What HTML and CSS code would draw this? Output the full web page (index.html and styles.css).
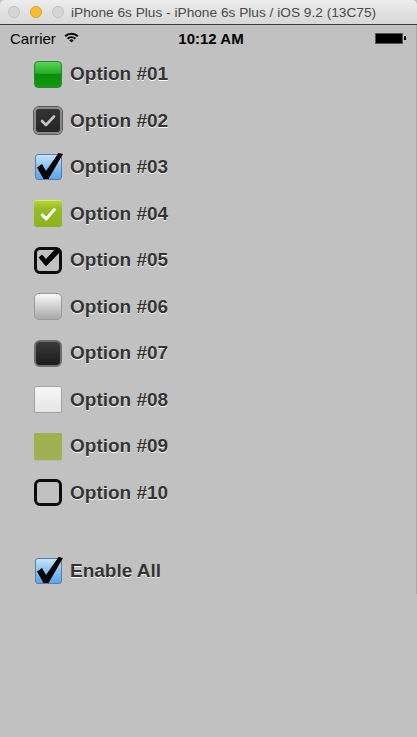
FILE: index.html
```html
<!DOCTYPE html>
<html lang="en">

<head>
  <meta charset="UTF-8">
  <title>Checkbox Styles</title>
  <link rel="stylesheet" href="styles.css">
</head>

<body>
  <div class="titlebar">
    <div class="lights">
      <span class="light"></span>
      <span class="light yellow"></span>
      <span class="light"></span>
    </div>
    <div class="title">iPhone 6s Plus - iPhone 6s Plus / iOS 9.2 (13C75)</div>
  </div>

  <div class="screen">
    <div class="statusbar">
      <div class="carrier">Carrier
        <svg class="wifi" width="15" height="11" viewBox="0 0 15 11">
          <path d="M0.5 3.6 A10 10 0 0 1 14.5 3.6 L13.1 5 A8 8 0 0 0 1.9 5 Z" fill="#000" />
          <path d="M2.9 6 A6.6 6.6 0 0 1 12.1 6 L10.7 7.4 A4.6 4.6 0 0 0 4.3 7.4 Z" fill="#000" />
          <path d="M5.3 8.4 A3.2 3.2 0 0 1 9.7 8.4 L7.5 10.6 Z" fill="#000" />
        </svg>
      </div>
      <div class="time">10:12 AM</div>
      <div class="battery"><span class="cell"></span><span class="tip"></span></div>
    </div>

    <ul class="options">
      <li class="option"><span class="box green"></span><span class="label">Option #01</span></li>
      <li class="option">
        <span class="box dark">
          <svg viewBox="0 0 24 23"><path d="M6 12 L10 16 L18 7.5" fill="none" stroke="#c4c4c4" stroke-width="2.6" stroke-linecap="round" stroke-linejoin="round" /></svg>
        </span><span class="label">Option #02</span>
      </li>
      <li class="option">
        <span class="box blue">
          <svg viewBox="0 0 25 24"><path d="M1 12.5 L6 9 L10 16 L22.5 -2 L27 -1 L12.5 24 L7.5 24 Z" fill="#000" /></svg>
        </span><span class="label">Option #03</span>
      </li>
      <li class="option">
        <span class="box lime">
          <svg viewBox="0 0 28 27"><path d="M8 14.5 L12.2 18.5 L20.5 9" fill="none" stroke="#fff" stroke-width="3.2" stroke-linecap="round" stroke-linejoin="round" /></svg>
        </span><span class="label">Option #04</span>
      </li>
      <li class="option">
        <span class="box outline">
          <svg viewBox="0 0 22 21"><path d="M1.5 7.5 L5 4.5 L9 9 L19.5 -2.5 L24 1 L9 16.5 Z" fill="#000" /></svg>
        </span><span class="label">Option #05</span>
      </li>
      <li class="option"><span class="box silver"></span><span class="label">Option #06</span></li>
      <li class="option"><span class="box black"></span><span class="label">Option #07</span></li>
      <li class="option"><span class="box white"></span><span class="label">Option #08</span></li>
      <li class="option"><span class="box olive"></span><span class="label">Option #09</span></li>
      <li class="option"><span class="box outline"></span><span class="label">Option #10</span></li>
      <li class="option all">
        <span class="box blue">
          <svg viewBox="0 0 25 24"><path d="M1 12.5 L6 9 L10 16 L22.5 -2 L27 -1 L12.5 24 L7.5 24 Z" fill="#000" /></svg>
        </span><span class="label">Enable All</span>
      </li>
    </ul>
  </div>
</body>

</html>
```

FILE: styles.css
```css
body {
  margin: 0;
  background: #c1c1c1;
  font-family: 'Liberation Sans', Arial, sans-serif;
  width: 417px;
  height: 737px;
  overflow: hidden;
}

/* Window title bar */
.titlebar {
  height: 24px;
  display: flex;
  align-items: center;
  background: linear-gradient(#ececec, #d8d8d8);
  border-bottom: 1px solid #3c3c3c;
  border-radius: 5px 5px 0 0;
}

.lights {
  display: flex;
  gap: 10px;
  padding-left: 8px;
}

.light {
  width: 12px;
  height: 12px;
  border-radius: 50%;
  background: #d6d6d6;
  border: 1px solid #c2c2c2;
  box-sizing: border-box;
}

.light.yellow {
  background: #f6bd2f;
  border-color: #dfa023;
}

.title {
  margin-left: 7px;
  font-size: 13.7px;
  color: #4a4a4a;
}

/* Simulator screen */
.screen {
  background: #c1c1c1;
  border-right: 1px solid #a8a8a8;
}

.statusbar {
  height: 26px;
  display: flex;
  align-items: center;
  justify-content: space-between;
  padding: 0 10px;
  font-size: 15px;
  color: #000;
  position: relative;
}

.carrier {
  display: flex;
  align-items: center;
  gap: 8px;
}

.wifi {
  margin-top: -2px;
}

.time {
  position: absolute;
  left: 0;
  right: 0;
  text-align: center;
  font-weight: bold;
  padding-left: 6px;
  pointer-events: none;
}

.battery {
  display: flex;
  align-items: center;
}

.battery .cell {
  width: 26px;
  height: 9px;
  background: #000;
  border: 1px solid #555;
}

.battery .tip {
  width: 2px;
  height: 4px;
  background: #000;
  margin-left: 1px;
}

/* Option list */
.options {
  list-style: none;
  margin: 0;
  padding: 0 0 0 34px;
}

.option {
  height: 46.5px;
  display: flex;
  align-items: center;
  gap: 8px;
}

.option.all {
  margin-top: 31.5px;
}

.label {
  font-size: 19px;
  font-weight: bold;
  color: #333;
  text-shadow: 0 1px 0 #fff;
}

.box {
  width: 28px;
  height: 27px;
  box-sizing: border-box;
  border-radius: 4px;
  position: relative;
  flex: none;
}

.box svg {
  position: absolute;
  left: 0;
  top: 0;
  width: 100%;
  height: 100%;
  overflow: visible;
}

.green {
  background: linear-gradient(#5ad35a 0%, #22b022 45%, #0b8e0b 50%, #109a10 100%);
  border: 1px solid #2a8a2a;
}

.dark {
  background: linear-gradient(#333, #262626);
  border: 2px solid #8a8a8a;
  box-shadow: 0 0 0 1px #5a5a5a;
  border-radius: 5px;
}

.blue {
  background: linear-gradient(#c6e4fc, #86c2f2 50%, #5aa4e8);
  border: 1px solid #5b7fa4;
  border-radius: 3px;
  margin-left: 1px;
  width: 27px;
  height: 26px;
}

.lime {
  background: linear-gradient(#b5d23c, #95bc24 30%, #8cb41e);
  border-top: 1px solid #e0ec60;
  border-radius: 3px;
}

.outline {
  border: 3px solid #0c0c0c;
  border-radius: 6px;
}

.silver {
  background: linear-gradient(#fafafa, #c8c8c8 60%, #a8a8a8);
  border: 1px solid #9c9c9c;
  border-radius: 5px;
}

.black {
  background: linear-gradient(#3a3a3a, #1c1c1c);
  border: 2px solid #6e6e6e;
  border-radius: 6px;
}

.white {
  background: linear-gradient(#f6f6f6, #e6e6e6);
  border: 1px solid #a4a4a4;
  border-radius: 2px;
}

.olive {
  background: #9fb04e;
  border-radius: 2px;
  box-shadow: 0 1px 0 #b8b8b8;
}
```
